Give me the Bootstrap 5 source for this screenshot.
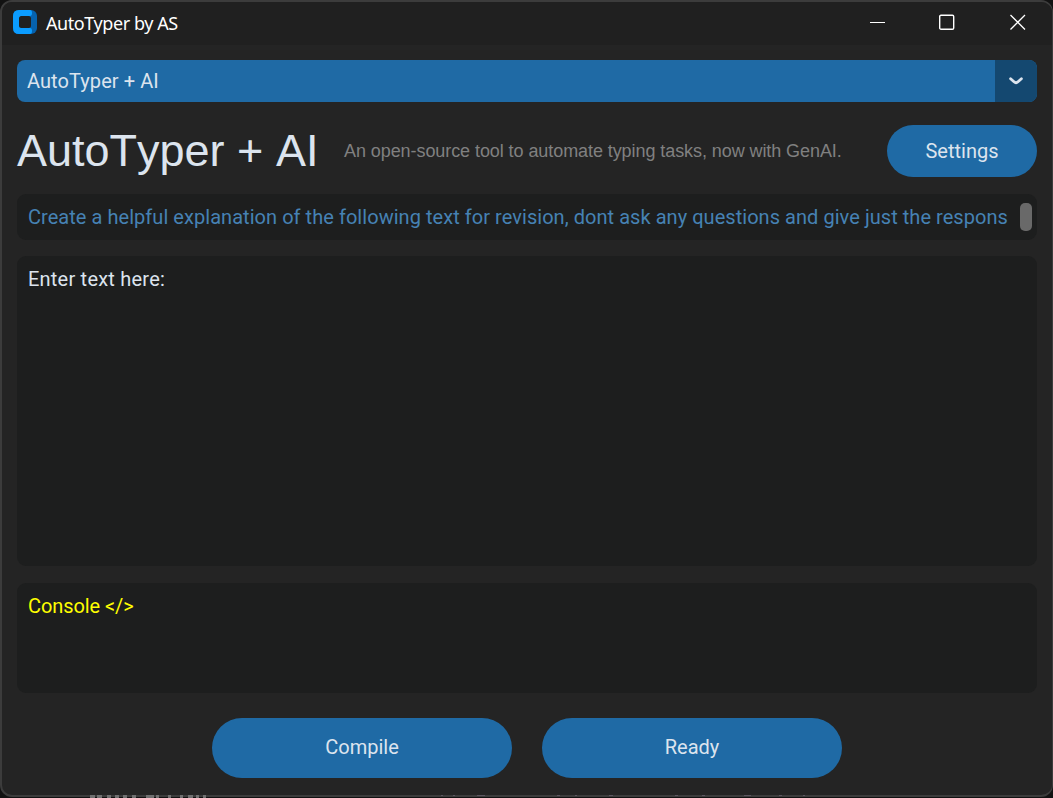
<!DOCTYPE html>
<html lang="en" data-bs-theme="dark">
<head>
<meta charset="utf-8">
<title>AutoTyper by AS</title>
<link href="https://cdn.jsdelivr.net/npm/bootstrap@5.3.0/dist/css/bootstrap.min.css" rel="stylesheet">
<style>
  body { background: #121212; font-family: Roboto, sans-serif; font-size: 20px; line-height: 24px; color: #dce4ee; }
  .app-window { width: 1053px; height: 797px; background: #242424; border: 2px solid #3c3c3c; border-right-width: 1px; border-radius: 12px; }
  .title-bar { height: 43px; background: #202020; padding: 0 26px 3px 11px; }
  .title-text { font: 18px/24px "Noto Sans", "Open Sans", sans-serif; color: #fff; letter-spacing: -.42px; margin-left: 9px; padding-top: 2px; }
  .win-controls { gap: 54px; }
  .app-body { padding: 15px 15px 0; }
  .mode-select { height: 42px; border-radius: 8px; background: #1f6aa5; }
  .mode-select .mode-value { padding-left: 10px; letter-spacing: .07px; }
  .mode-arrow { width: 42px; background: #144870; }
  .heading-row { height: 52px; margin-top: 23px; }
  .app-heading { font: 45px/52px "Liberation Sans", Arial, sans-serif; font-kerning: none; width: 327px; color: #dce4ee; }
  .tagline { font: 18px/24px "Liberation Sans", Arial, sans-serif; letter-spacing: -.075px; color: #808080; }
  .pill { background: #1f6aa5; color: #dce4ee; font-size: 20px; line-height: 24px; border: 0; border-radius: 30px; padding: 0; }
  .pill:hover { background: #144870; color: #dce4ee; }
  .pill-settings { width: 150px; height: 52px; }
  .pill-action { width: 300px; height: 60px; padding-bottom: 2px; }
  .panel { background: #1d1e1e; border-radius: 9px; padding: 11px; }
  .panel-prompt { height: 46px; margin-top: 17px; color: #4682b4; padding-right: 5px; letter-spacing: .046px; }
  .scroll-thumb { width: 12px; height: 28px; border-radius: 5px; background: #696969; }
  .panel-input { height: 310px; margin-top: 16px; letter-spacing: .22px; }
  .panel-console { height: 110px; margin-top: 17px; color: #ff0; letter-spacing: -.08px; }
  .action-row { gap: 30px; margin-top: 25px; }
  .backdrop-edge { left: 0; bottom: 0; }
</style>
</head>
<body class="overflow-hidden">
<div class="app-window overflow-hidden d-flex flex-column">
  <header class="title-bar d-flex align-items-center justify-content-between">
    <div class="d-flex align-items-center">
      <svg width="24" height="24" viewBox="0 0 24 24">
        <rect width="24" height="24" rx="6" fill="#0662ae"/>
        <path d="M6 0H17Q19 0 19 3T17 6H8L6 8V16L8 18H17Q19 18 19 21T17 24H6Q0 24 0 18V6Q0 0 6 0Z" fill="#0b9cff"/>
        <rect x="6" y="6" width="12" height="12" rx="2.5" fill="#202020"/>
      </svg>
      <span class="title-text">AutoTyper by AS</span>
    </div>
    <div class="win-controls d-flex align-items-center">
      <svg width="15" height="16" fill="none" stroke="#fff"><path d="M0 8.5H15"/></svg>
      <svg width="17" height="16" fill="none" stroke="#fff" stroke-width="1.4"><rect x=".7" y="1.2" width="14" height="14" rx="1.3"/></svg>
      <svg width="16" height="16" fill="none" stroke="#fff" stroke-width="1.3"><path d="M.5 1L15 15.5M15 1L.5 15.5"/></svg>
    </div>
  </header>
  <main class="app-body">
    <div class="mode-select d-flex align-items-stretch overflow-hidden">
      <span class="mode-value flex-grow-1 align-self-center">AutoTyper + AI</span>
      <span class="mode-arrow d-flex align-items-center justify-content-center">
        <svg width="14" height="8" fill="none" stroke="#dce4ee" stroke-width="2.8" stroke-linecap="round" stroke-linejoin="round"><path d="M1.6 1.8L5 4.8Q7 6.6 9 4.8L12.4 1.8"/></svg>
      </span>
    </div>
    <div class="heading-row d-flex align-items-center">
      <h1 class="app-heading mb-0 text-nowrap">AutoTyper + AI</h1>
      <span class="tagline text-nowrap">An open-source tool to automate typing tasks, now with GenAI.</span>
      <button type="button" class="btn pill pill-settings ms-auto">Settings</button>
    </div>
    <div class="panel panel-prompt d-flex align-items-center justify-content-between">
      <span class="text-nowrap">Create a helpful explanation of the following text for revision, dont ask any questions and give just the respons</span>
      <span class="scroll-thumb"></span>
    </div>
    <div class="panel panel-input">Enter text here:</div>
    <div class="panel panel-console">Console &lt;/&gt;</div>
    <div class="action-row d-flex justify-content-center">
      <button type="button" class="btn pill pill-action">Compile</button>
      <button type="button" class="btn pill pill-action">Ready</button>
    </div>
  </main>
</div>
<svg class="backdrop-edge position-absolute" width="1053" height="3" fill="none" stroke="#707070" stroke-width="3">
  <path d="M90 1.5h5m2 0h5m5 0h4m4 0h4m4 0h4m5 0h4m10 0h8m2 0h3m9 0h3m9 0h3m5 0h5m3 0h3m4 0h3"/>
  <path d="M441 .5h2m10 0h2m22 0h8m72 0h3m15 0h2m32 0h4m62 0h3m24 0h3m39 0h7m28 0h3m21 0h2" stroke="#5c5660" stroke-width="1"/>
</svg>
</body>
</html>
